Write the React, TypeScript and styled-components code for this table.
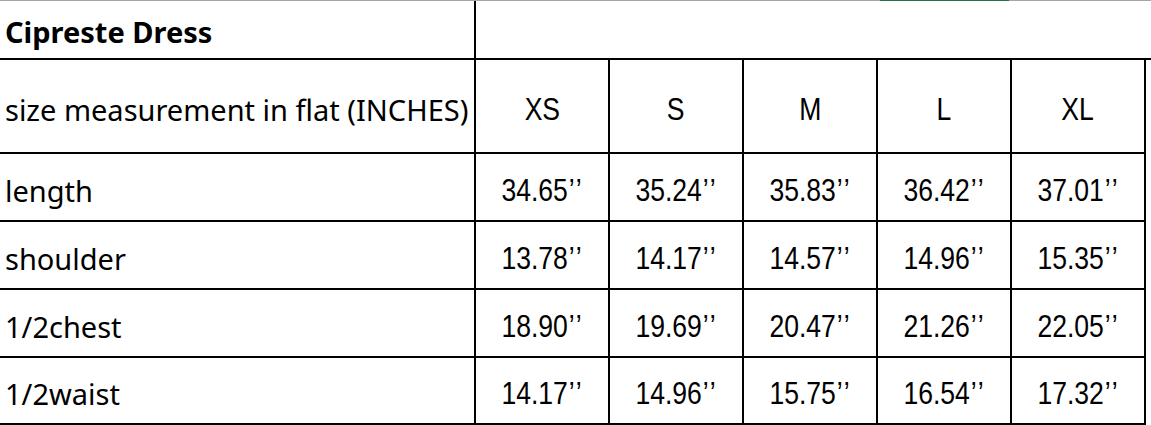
import React from "react";
import styled, { createGlobalStyle } from "styled-components";

const Global = createGlobalStyle`
  html, body { margin: 0; padding: 0; background: #fff; }
  body { width: 1151px; height: 425px; overflow: hidden; }
`;

const Sheet = styled.div`
  width: 1151px;
  display: flex;
  flex-direction: column;
  color: #000;
`;

const TopEdge = styled.div`
  height: 1px;
  background: #a6a6a6;
  display: flex;
`;

const Selected = styled.div`
  margin-left: 880px;
  width: 129px;
  height: 1px;
  background: #217346;
`;

const Row = styled.div<{ $h: number; $full?: boolean }>`
  display: flex;
  height: ${(p) => p.$h}px;
  width: ${(p) => (p.$full ? "1151px" : "1146px")};
  border-bottom: 2px solid #000;
  box-sizing: border-box;
`;

const LabelCell = styled.div<{ $bold?: boolean; $pt: number }>`
  width: 476px;
  box-sizing: border-box;
  border-right: 2px solid #000;
  display: flex;
  align-items: center;
  padding: ${(p) => p.$pt}px 0 0 5px;
  font-family: "Noto Sans", "Open Sans", sans-serif;
  font-size: 29px;
  font-weight: ${(p) => (p.$bold ? 700 : 400)};
  white-space: nowrap;
  overflow: hidden;
`;

const SizeCell = styled.div<{ $pt: number }>`
  width: 134px;
  box-sizing: border-box;
  border-right: 2px solid #000;
  display: flex;
  align-items: center;
  justify-content: center;
  padding-top: ${(p) => p.$pt}px;
  font-family: "Liberation Sans", Arial, sans-serif;
  font-size: 32px;
  white-space: nowrap;
`;

const Narrow = styled.span`
  display: inline-block;
  transform: scaleX(0.83);
`;

const Inch = styled.span`
  letter-spacing: 2px;
  margin-left: 1px;
`;

const Blank = styled.div`
  flex: 1;
`;

const sizes = ["XS", "S", "M", "L", "XL"];
const rows: { label: string; values: string[]; h: number }[] = [
  { label: "length", values: ["34.65", "35.24", "35.83", "36.42", "37.01"], h: 68 },
  { label: "shoulder", values: ["13.78", "14.17", "14.57", "14.96", "15.35"], h: 68 },
  { label: "1/2chest", values: ["18.90", "19.69", "20.47", "21.26", "22.05"], h: 68 },
  { label: "1/2waist", values: ["14.17", "14.96", "15.75", "16.54", "17.32"], h: 67 },
];

export default function App() {
  return (
    <>
      <Global />
      <Sheet>
        <TopEdge>
          <Selected />
        </TopEdge>
        <Row $h={59} $full>
          <LabelCell $bold $pt={4}>Cipreste Dress</LabelCell>
          <Blank />
        </Row>
        <Row $h={94}>
          <LabelCell $pt={6}>size measurement in flat (INCHES)</LabelCell>
          {sizes.map((s) => (
            <SizeCell key={s} $pt={6}>
              <Narrow>{s}</Narrow>
            </SizeCell>
          ))}
        </Row>
        {rows.map((r) => (
          <Row key={r.label} $h={r.h}>
            <LabelCell $pt={6}>{r.label}</LabelCell>
            {r.values.map((v, i) => (
              <SizeCell key={i} $pt={6}>
                <Narrow>
                  {v}
                  <Inch>’’</Inch>
                </Narrow>
              </SizeCell>
            ))}
          </Row>
        ))}
      </Sheet>
    </>
  );
}
